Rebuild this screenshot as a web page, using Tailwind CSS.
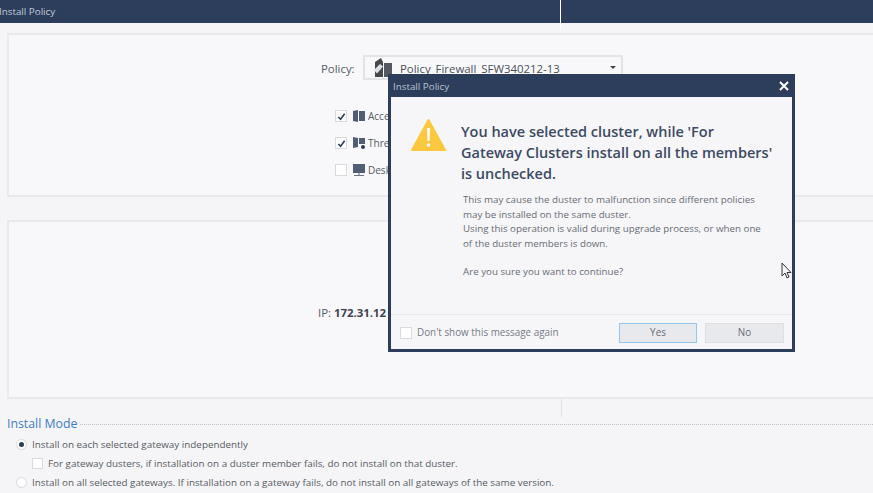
<!DOCTYPE html>
<html lang="en">
<head>
  <meta charset="UTF-8" />
  <title>Install Policy</title>
  <script src="https://cdn.jsdelivr.net/npm/@tailwindcss/browser@4"></script>
</head>
<body class="relative w-[873px] h-[493px] overflow-hidden bg-[#f5f5f7] font-['Open_Sans',sans-serif] text-[#555a63]">

  <!-- Title bar -->
  <header class="relative h-[23px] bg-[#2c3e5c] flex items-center">
    <span class="text-[9.8px] text-[#c3cad6] -ml-[1px] mt-[1px]">Install Policy</span>
    <div class="absolute left-[560px] top-0 w-[1px] h-[30px] bg-white"></div>
  </header>

  <!-- Policy panel -->
  <section class="ml-[7px] mt-[10px] h-[164px] border-2 border-r-0 border-[#e9e9ec] bg-[#f8f8fa]">
    <div class="flex items-center h-[25px] mt-[20px] ml-[312px]">
      <span class="text-[11.4px] w-[42px] mt-[2px]">Policy:</span>
      <div class="w-[260px] h-[25px] border-2 border-[#e3e3e6] flex items-center pl-[8px] pr-[5px]">
        <svg class="w-[20px] h-[21px] shrink-0" viewBox="0 0 20 21">
          <path d="M2 5 8 1l2 4v15H2z" fill="#45484d"/>
          <path d="M11 6h8v14h-8z" fill="#55585d"/>
          <path d="M1 13 7 7l3 2.500-6 7z" fill="#dfe2e7"/>
        </svg>
        <span class="ml-[7px] mt-[2px] text-[11.4px] text-[#4b5059] whitespace-nowrap">Policy_Firewall_SFW340212-13</span>
        <span class="ml-auto w-0 h-0 border-x-[3px] border-x-transparent border-t-[3px] border-t-[#444]"></span>
      </div>
    </div>
    <ul class="mt-[30px] ml-[326px] flex flex-col gap-[15px] text-[10px]">
      <li class="flex items-center h-[12px]">
        <span class="w-[12px] h-[12px] border border-[#d9d9de] bg-white flex items-center justify-center">
          <svg class="w-[9px] h-[9px]" viewBox="0 0 10 10"><path d="M1.500 5.500 4 8l4.500-6" fill="none" stroke="#2c3e5c" stroke-width="1.800"/></svg>
        </span>
        <svg class="ml-[5px] w-[14px] h-[14px]" viewBox="0 0 14 14"><path d="M1 2l5-1v12l-5-1zM7 2h6v10H7z" fill="#4f5e75"/></svg>
        <span class="ml-[2px]">Access Control</span>
      </li>
      <li class="flex items-center h-[12px]">
        <span class="w-[12px] h-[12px] border border-[#d9d9de] bg-white flex items-center justify-center">
          <svg class="w-[9px] h-[9px]" viewBox="0 0 10 10"><path d="M1.500 5.500 4 8l4.500-6" fill="none" stroke="#2c3e5c" stroke-width="1.800"/></svg>
        </span>
        <svg class="ml-[5px] w-[14px] h-[14px]" viewBox="0 0 14 14"><path d="M1 1l5 1v9l-5 1zM7 2h6v6H7z" fill="#4f5e75"/><circle cx="11" cy="11" r="2" fill="#2c3e5c"/></svg>
        <span class="ml-[2px]">Threat Prevention</span>
      </li>
      <li class="flex items-center h-[12px]">
        <span class="w-[12px] h-[12px] border border-[#d9d9de] bg-white"></span>
        <svg class="ml-[5px] w-[14px] h-[14px]" viewBox="0 0 14 14"><path d="M1 1h12v9H1z" fill="#4f5e75"/><path d="M6.500 10h1v2h-1zM2 12h10v1H2z" fill="#6b7688"/></svg>
        <span class="ml-[2px]">Desktop Security</span>
      </li>
    </ul>
  </section>

  <!-- Gateway panel -->
  <section class="ml-[7px] mt-[23px] h-[179px] border-2 border-r-0 border-[#e9e9ec] bg-[#f8f8fa] flex items-center">
    <p class="ml-[309px] mt-[7px] text-[11.4px] whitespace-nowrap">IP: <b class="font-bold text-[#3f4550]">172.31.12</b></p>
  </section>

  <!-- Install mode -->
  <section class="relative mt-[16px] text-[9.85px]">
    <div class="absolute left-[561px] -top-[16px] w-[1px] h-[18px] bg-[#e3e3e6]"></div>
    <div class="flex items-center pl-[7px] gap-[3px]">
      <h2 class="text-[12.3px] leading-[18px] text-[#3d7cc9]">Install Mode</h2>
      <div class="flex-1 border-t border-dotted border-[#bfc1c6]"></div>
    </div>
    <div class="mt-[5px] pl-[16px] flex flex-col gap-[7px]">
      <label class="flex items-center h-[12px] gap-[5px]">
        <span class="w-[11px] h-[11px] rounded-full border border-[#d9d9de] bg-white flex items-center justify-center">
          <span class="w-[5px] h-[5px] rounded-full bg-[#2c3e5c]"></span>
        </span>
        <span>Install on each selected gateway independently</span>
      </label>
      <label class="flex items-center h-[12px] gap-[5px] pl-[16px]">
        <span class="w-[11px] h-[11px] border border-[#d9d9de] bg-white"></span>
        <span>For gateway dusters, if installation on a duster member fails, do not install on that duster.</span>
      </label>
      <label class="flex items-center h-[12px] gap-[5px]">
        <span class="w-[11px] h-[11px] rounded-full border border-[#d9d9de] bg-white"></span>
        <span>Install on all selected gateways. If installation on a gateway fails, do not install on all gateways of the same version.</span>
      </label>
    </div>
  </section>

  <!-- Modal dialog -->
  <div class="absolute left-[388px] top-[74px] w-[407px] h-[278px] border-[3px] border-t-0 border-[#2c3e5c] bg-[#f6f6f9] flex flex-col">
    <div class="h-[23px] -mx-[3px] bg-[#2c3e5c] flex items-center justify-between pl-[5px] pr-[5px] shrink-0">
      <span class="text-[9.8px] text-[#b9c2d0] mt-[3px]">Install Policy</span>
      <svg class="w-[12px] h-[12px]" viewBox="0 0 12 12"><path d="M2 2l8 8M10 2l-8 8" stroke="#fff" stroke-width="2"/></svg>
    </div>
    <div class="flex-1 flex pl-[19px] pt-[21px]">
      <svg class="w-[37px] h-[34px] shrink-0" viewBox="0 0 37 34">
        <path d="M18.500 2 35 32H2z" fill="#fdc73f" stroke="#fdc73f" stroke-width="2" stroke-linejoin="round"/>
        <path d="M17 10h3l-.5 13h-2z" fill="#fff"/>
        <circle cx="18.500" cy="27" r="1.800" fill="#fff"/>
      </svg>
      <div class="ml-[14px] w-[325px]">
        <h1 class="mt-[3px] text-[14.5px] leading-[21px] font-semibold text-[#3c4a63] whitespace-nowrap">You have selected cluster, while 'For<br>Gateway Clusters install on all the members'<br>is unchecked.</h1>
        <p class="mt-[9px] ml-[2px] text-[9.76px] leading-[14.5px] text-[#686c74]">This may cause the duster to malfunction since different policies<br>may be installed on the same duster.<br>Using this operation is valid during upgrade process, or when one<br>of the duster members is down.</p>
        <p class="mt-[14px] ml-[2px] text-[9.76px] leading-[14.5px] text-[#686c74]">Are you sure you want to continue?</p>
      </div>
    </div>
    <div class="h-[35px] pt-[1px] border-t border-[#e9e9ec] flex items-center pl-[9px] pr-[8px] shrink-0">
      <span class="w-[12px] h-[12px] border border-[#d9d9de] bg-white"></span>
      <span class="ml-[5px] text-[9.9px] text-[#777b83]">Don't show this message again</span>
      <button class="ml-auto w-[78px] h-[20px] border border-[#90c8ee] bg-[#e8e9ed] text-[9.9px] text-[#666a72]">Yes</button>
      <button class="ml-[8px] w-[79px] h-[20px] border border-[#dfdfe3] bg-[#e8e9ed] text-[9.9px] text-[#666a72]">No</button>
    </div>
  </div>

  <!-- Mouse pointer -->
  <svg class="absolute left-[781px] top-[262px] w-[12px] h-[17px]" viewBox="0 0 12 17">
    <path d="M1 1v13l3-3 2 5 2-1-2-4.500h4z" fill="#f5f5f7" stroke="#33363b" stroke-width="1"/>
  </svg>
</body>
</html>
